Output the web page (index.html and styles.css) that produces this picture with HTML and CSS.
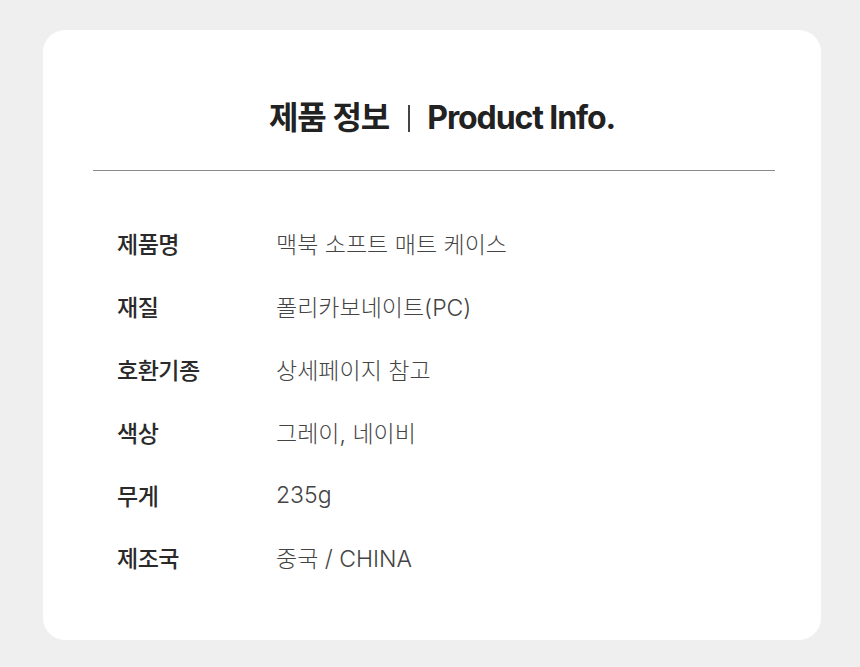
FILE: index.html
```html
<!DOCTYPE html>
<html lang="ko">
<head>
<meta charset="utf-8">
<title>제품 정보</title>
<link rel="stylesheet" href="styles.css">
</head>
<body>
<div class="card">
  <h1 class="title"><span class="ko">제품 정보</span><span class="sep"></span><span class="en">Product Info.</span></h1>
  <hr class="divider">
  <dl class="specs">
    <div class="row"><dt>제품명</dt><dd>맥북 소프트 매트 케이스</dd></div>
    <div class="row"><dt>재질</dt><dd>폴리카보네이트(PC)</dd></div>
    <div class="row"><dt>호환기종</dt><dd>상세페이지 참고</dd></div>
    <div class="row"><dt>색상</dt><dd>그레이, 네이비</dd></div>
    <div class="row"><dt>무게</dt><dd>235g</dd></div>
    <div class="row"><dt>제조국</dt><dd>중국 / CHINA</dd></div>
  </dl>
</div>
</body>
</html>
```

FILE: styles.css
```css
html, body {
  margin: 0;
  padding: 0;
}
body {
  background: #efefef;
  font-family: "Inter", "Noto Sans CJK KR", sans-serif;
  color: #222;
  padding: 30px 39px 27px 43px;
  height: 667px;
  box-sizing: border-box;
}
.card {
  background: #fff;
  border-radius: 22px;
  height: 610px;
  box-sizing: border-box;
  padding: 68px 46px 0 50px;
}
.title {
  margin: 0;
  height: 40px;
  display: flex;
  justify-content: center;
  align-items: center;
  font-size: 32px;
  line-height: 40px;
  font-weight: 700;
  color: #222;
  letter-spacing: -1px;
  padding-left: 16px;
}
.title .sep {
  display: inline-block;
  width: 2px;
  height: 27px;
  background: #444;
  margin: 0 17px 0 19px;
}
.title .en {
  letter-spacing: -1.1px;
}
.divider {
  border: 0;
  height: 1px;
  background: #8a8a8a;
  margin: 32px 0 0 0;
}
.specs {
  margin: 41px 0 0 24px;
  padding: 0;
}
.row {
  display: flex;
  align-items: center;
  height: 62.8px;
}
.row dt {
  width: 159px;
  flex: none;
  font-size: 23px;
  font-weight: 500;
  color: #2a2a2a;
  letter-spacing: -0.5px;
}
.row dd {
  margin: 0;
  font-size: 23px;
  font-weight: 300;
  color: #444;
  letter-spacing: 0;
}
```
